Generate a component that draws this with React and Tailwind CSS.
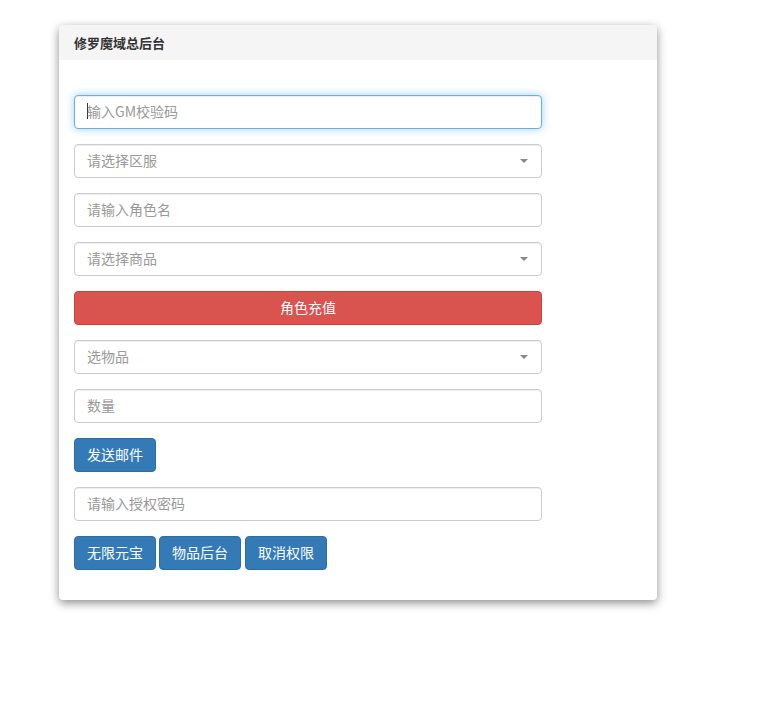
import React from "react";

const font = { fontFamily: '"Noto Sans CJK SC", "Noto Sans", sans-serif' };

function TextInput({ placeholder, focused }) {
  return (
    <div
      className={`h-[34px] w-[468px] rounded border bg-white px-3 pb-[2px] flex items-center text-[14px] ${
        focused
          ? "border-[#66afe9] shadow-[inset_0_1px_1px_rgba(0,0,0,0.075),0_0_8px_rgba(102,175,233,0.6)]"
          : "border-[#ccc] shadow-[inset_0_1px_1px_rgba(0,0,0,0.075)]"
      }`}
    >
      {focused && <span className="w-px h-[16px] bg-[#333] -mr-px" />}
      <span className="text-[#999]">{placeholder}</span>
    </div>
  );
}

function SelectBox({ placeholder }) {
  return (
    <div className="h-[34px] w-[468px] rounded border border-[#ccc] bg-white pl-3 pr-[13px] flex items-center justify-between text-[14px] shadow-[inset_0_1px_1px_rgba(0,0,0,0.075)]">
      <span className="text-[#999] pb-[2px]">{placeholder}</span>
      <span className="w-0 h-0 border-l-[4px] border-r-[4px] border-t-[4px] border-l-transparent border-r-transparent border-t-[#888]" />
    </div>
  );
}

function BlueButton({ children }) {
  return (
    <button className="h-[34px] w-[82px] rounded border border-[#2e6da4] bg-[#337ab7] pb-[2px] text-[14px] text-white">
      {children}
    </button>
  );
}

export default function App() {
  return (
    <div className="min-h-[719px] bg-white pt-[25px] pl-[59px]" style={font}>
      <div className="w-[598px] rounded-[4px] bg-white shadow-[0_3px_10px_rgba(0,0,0,0.45)] overflow-hidden">
        <div className="h-[35px] bg-[#f5f5f5] px-[15px] flex items-center text-[13px] font-bold text-[#333]">
          修罗魔域总后台
        </div>
        <div className="px-[15px] pt-[35px] pb-[30px] flex flex-col gap-[15px]">
          <TextInput placeholder="输入GM校验码" focused />
          <SelectBox placeholder="请选择区服" />
          <TextInput placeholder="请输入角色名" />
          <SelectBox placeholder="请选择商品" />
          <button className="h-[34px] w-[468px] rounded border border-[#d43f3a] bg-[#d9534f] pb-[2px] text-[14px] text-white">
            角色充值
          </button>
          <SelectBox placeholder="选物品" />
          <TextInput placeholder="数量" />
          <div>
            <BlueButton>发送邮件</BlueButton>
          </div>
          <TextInput placeholder="请输入授权密码" />
          <div className="flex gap-[3px]">
            <BlueButton>无限元宝</BlueButton>
            <BlueButton>物品后台</BlueButton>
            <div className="pl-px">
              <BlueButton>取消权限</BlueButton>
            </div>
          </div>
        </div>
      </div>
    </div>
  );
}
